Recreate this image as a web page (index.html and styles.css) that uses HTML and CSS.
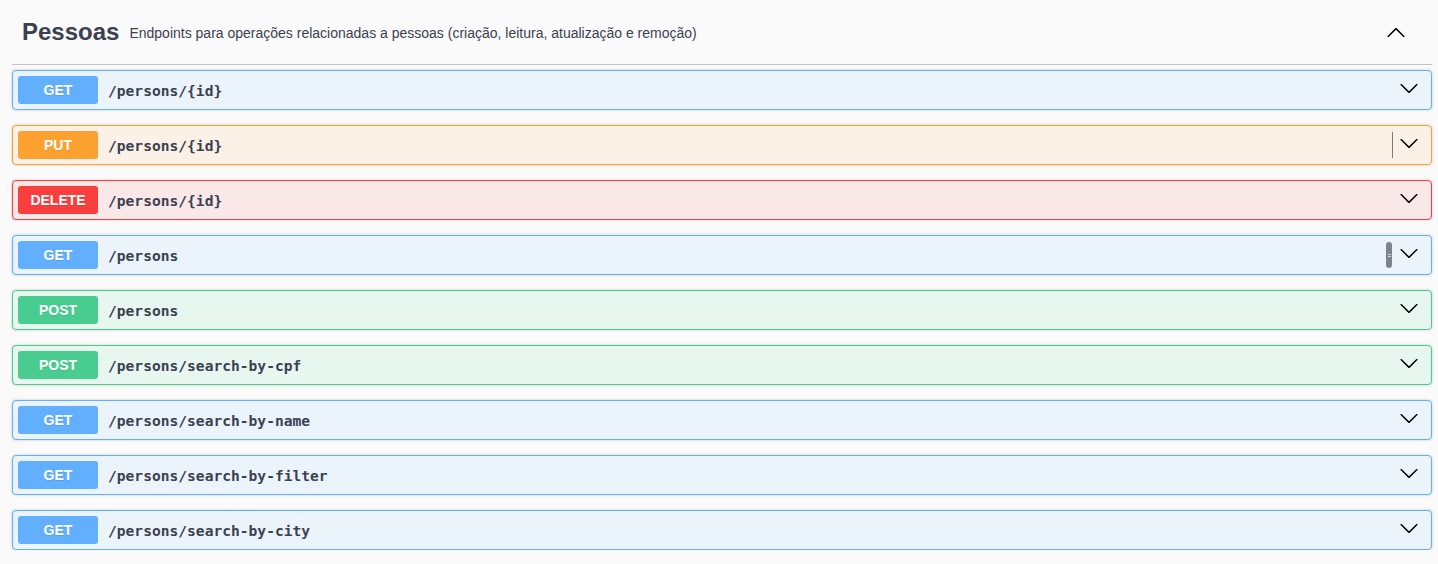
FILE: index.html
```html
<!DOCTYPE html>
<html lang="pt">
<head>
<meta charset="utf-8">
<title>Pessoas</title>
<link rel="stylesheet" href="styles.css">
</head>
<body>
<div class="wrapper">
  <section class="tag-section">
    <h3 class="tag">
      <span class="tag-name">Pessoas</span>
      <small class="tag-desc">Endpoints para operações relacionadas a pessoas (criação, leitura, atualização e remoção)</small>
      <svg class="arrow arrow-up" viewBox="0 0 20 20" width="20" height="20"><path d="M17.418 6.109c.272-.268.709-.268.979 0s.271.701 0 .969l-7.908 7.83c-.27.268-.707.268-.979 0l-7.908-7.83c-.27-.268-.27-.701 0-.969.271-.268.709-.268.979 0L10 13.25l7.418-7.141z"/></svg>
    </h3>
    <div class="ops">
      <div class="op op-get"><span class="method">GET</span><span class="path">/persons/{id}</span><svg class="arrow" viewBox="0 0 20 20" width="20" height="20"><path d="M17.418 6.109c.272-.268.709-.268.979 0s.271.701 0 .969l-7.908 7.83c-.27.268-.707.268-.979 0l-7.908-7.830c-.27-.268-.27-.701 0-.969.271-.268.709-.268.979 0L10 13.25l7.418-7.141z"/></svg></div>
      <div class="op op-put"><span class="method">PUT</span><span class="path">/persons/{id}</span><span class="divider"></span><svg class="arrow" viewBox="0 0 20 20" width="20" height="20"><path d="M17.418 6.109c.272-.268.709-.268.979 0s.271.701 0 .969l-7.908 7.83c-.27.268-.707.268-.979 0l-7.908-7.83c-.27-.268-.27-.701 0-.969.271-.268.709-.268.979 0L10 13.25l7.418-7.141z"/></svg></div>
      <div class="op op-delete"><span class="method">DELETE</span><span class="path">/persons/{id}</span><svg class="arrow" viewBox="0 0 20 20" width="20" height="20"><path d="M17.418 6.109c.272-.268.709-.268.979 0s.271.701 0 .969l-7.908 7.83c-.27.268-.707.268-.979 0l-7.908-7.83c-.27-.268-.27-.701 0-.969.271-.268.709-.268.979 0L10 13.25l7.418-7.141z"/></svg></div>
      <div class="op op-get"><span class="method">GET</span><span class="path">/persons</span><span class="pill"><span class="pill-mark"></span></span><svg class="arrow" viewBox="0 0 20 20" width="20" height="20"><path d="M17.418 6.109c.272-.268.709-.268.979 0s.271.701 0 .969l-7.908 7.83c-.27.268-.707.268-.979 0l-7.908-7.83c-.27-.268-.27-.701 0-.969.271-.268.709-.268.979 0L10 13.25l7.418-7.141z"/></svg></div>
      <div class="op op-post"><span class="method">POST</span><span class="path">/persons</span><svg class="arrow" viewBox="0 0 20 20" width="20" height="20"><path d="M17.418 6.109c.272-.268.709-.268.979 0s.271.701 0 .969l-7.908 7.83c-.27.268-.707.268-.979 0l-7.908-7.83c-.27-.268-.27-.701 0-.969.271-.268.709-.268.979 0L10 13.25l7.418-7.141z"/></svg></div>
      <div class="op op-post"><span class="method">POST</span><span class="path">/persons/search-by-cpf</span><svg class="arrow" viewBox="0 0 20 20" width="20" height="20"><path d="M17.418 6.109c.272-.268.709-.268.979 0s.271.701 0 .969l-7.908 7.83c-.27.268-.707.268-.979 0l-7.908-7.83c-.27-.268-.27-.701 0-.969.271-.268.709-.268.979 0L10 13.25l7.418-7.141z"/></svg></div>
      <div class="op op-get"><span class="method">GET</span><span class="path">/persons/search-by-name</span><svg class="arrow" viewBox="0 0 20 20" width="20" height="20"><path d="M17.418 6.109c.272-.268.709-.268.979 0s.271.701 0 .969l-7.908 7.83c-.27.268-.707.268-.979 0l-7.908-7.83c-.27-.268-.27-.701 0-.969.271-.268.709-.268.979 0L10 13.25l7.418-7.141z"/></svg></div>
      <div class="op op-get"><span class="method">GET</span><span class="path">/persons/search-by-filter</span><svg class="arrow" viewBox="0 0 20 20" width="20" height="20"><path d="M17.418 6.109c.272-.268.709-.268.979 0s.271.701 0 .969l-7.908 7.83c-.27.268-.707.268-.979 0l-7.908-7.83c-.27-.268-.27-.701 0-.969.271-.268.709-.268.979 0L10 13.25l7.418-7.141z"/></svg></div>
      <div class="op op-get"><span class="method">GET</span><span class="path">/persons/search-by-city</span><svg class="arrow" viewBox="0 0 20 20" width="20" height="20"><path d="M17.418 6.109c.272-.268.709-.268.979 0s.271.701 0 .969l-7.908 7.83c-.27.268-.707.268-.979 0l-7.908-7.83c-.27-.268-.27-.701 0-.969.271-.268.709-.268.979 0L10 13.25l7.418-7.141z"/></svg></div>
    </div>
  </section>
</div>
</body>
</html>
```

FILE: styles.css
```css
html, body {
  margin: 0;
  padding: 0;
  background: #fafafa;
}
body {
  font-family: "Liberation Sans", Arial, sans-serif;
  color: #3b4151;
}
.wrapper {
  width: 1420px;
  padding-left: 12px;
}
.tag {
  margin: 0;
  box-sizing: border-box;
  display: flex;
  align-items: center;
  padding: 0 26px 0 10px;
  border-bottom: 1px solid rgba(59, 65, 81, 0.3);
  height: 65px;
}
.tag-name {
  font-size: 24px;
  font-weight: bold;
  color: #3b4151;
}
.tag-desc {
  flex: 1;
  font-size: 14px;
  font-weight: normal;
  color: #3b4151;
  padding: 0 10px;
  margin-top: 1px;
}
.arrow {
  display: block;
  flex: none;
  fill: #000;
}
.arrow-up {
  transform: rotate(180deg);
  margin-top: 1px;
}
.op .arrow {
  margin-top: -4px;
}
.ops {
  display: flex;
  flex-direction: column;
  gap: 15px;
  padding-top: 5px;
}
.op {
  display: flex;
  align-items: center;
  height: 40px;
  box-sizing: border-box;
  padding: 5px 12px 5px 5px;
  border: 1px solid;
  border-radius: 4px;
  box-shadow: 0 0 3px rgba(0, 0, 0, 0.19);
}
.method {
  flex: none;
  width: 80px;
  height: 28px;
  line-height: 28px;
  text-align: center;
  border-radius: 3px;
  color: #fff;
  font-size: 14px;
  font-weight: bold;
  text-shadow: 0 1px 0 rgba(0, 0, 0, 0.1);
}
.path {
  flex: 1;
  padding: 0 10px;
  font-family: "DejaVu Sans Mono", "Liberation Mono", monospace;
  font-size: 14.6px;
  font-weight: bold;
  color: #3b4151;
}
.op-get { background: #ebf3fb; border-color: #61affe; }
.op-get .method { background: #61affe; }
.op-put { background: #fbf1e6; border-color: #fca130; }
.op-put .method { background: #fca130; }
.op-delete { background: #fae7e7; border-color: #f93e3e; }
.op-delete .method { background: #f93e3e; }
.op-post { background: #e8f6f0; border-color: #49cc90; }
.op-post .method { background: #49cc90; }
.divider {
  flex: none;
  width: 1px;
  height: 26px;
  background: #7a7a7a;
  margin-right: 6px;
}
.pill {
  flex: none;
  width: 6px;
  height: 26px;
  border-radius: 3px;
  background: #7d8390;
  margin-right: 7px;
  display: flex;
  align-items: center;
  justify-content: center;
}
.pill-mark {
  width: 3px;
  height: 3px;
  border-top: 1px solid #d0d3da;
  border-bottom: 1px solid #d0d3da;
  box-sizing: border-box;
}
```
